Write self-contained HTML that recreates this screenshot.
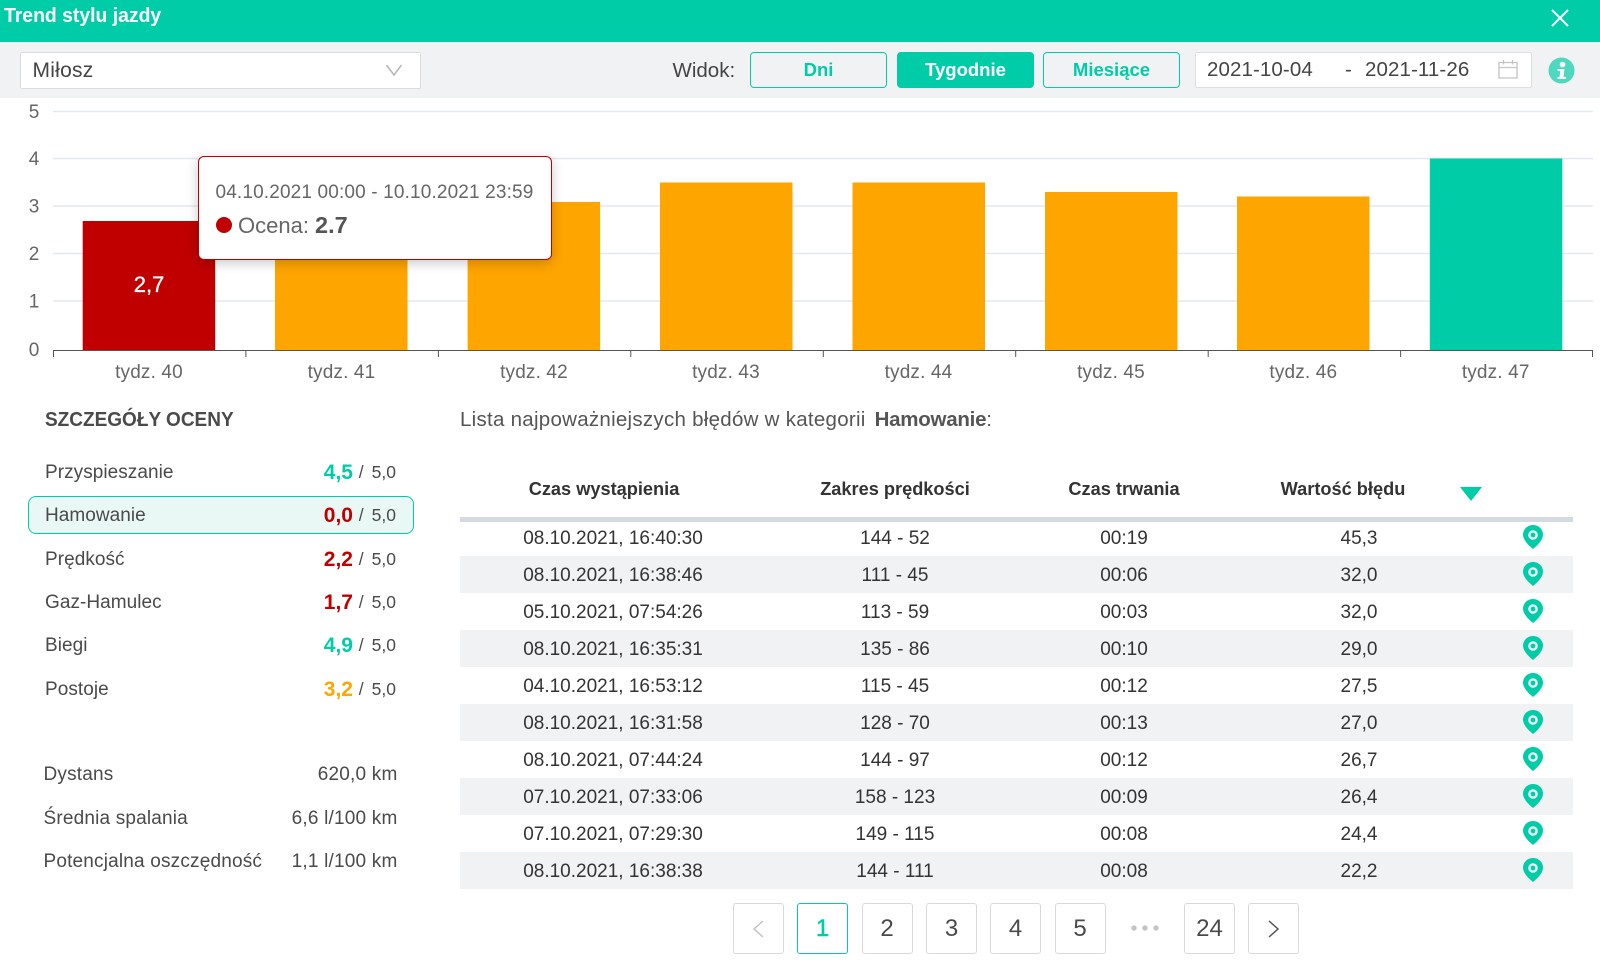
<!DOCTYPE html>
<html lang="pl"><head><meta charset="utf-8"><title>Trend stylu jazdy</title>
<style>
*{box-sizing:border-box}
html,body{margin:0;padding:0;background:#fff}
body{width:1600px;height:964px;position:relative;overflow:hidden;font-family:"Liberation Sans",sans-serif;color:#4a4a4a}
.a{position:absolute;white-space:nowrap}
.c{position:absolute;white-space:nowrap;text-align:center;width:300px;transform:translateX(-150px)}
.btn{position:absolute;top:52px;height:36px;width:137px;border:1px solid #00cda8;border-radius:4px;color:#00cda8;font-weight:bold;font-size:18.500px;line-height:33px;text-align:center}
.r{position:absolute;left:460px;width:1113px;height:37px;font-size:19px;line-height:39px;color:#333}
.r.g{background:#f1f2f4}
.r span{position:absolute;width:300px;text-align:center;transform:translateX(-150px);white-space:nowrap}
.r svg{position:absolute;left:1063px;top:6px}
.h{font-size:18.200px;font-weight:bold;color:#333;top:477px;line-height:24px}
.l{position:absolute;left:45px;width:352px;height:30px;font-size:19px;letter-spacing:.05px;line-height:32px}
.l b{position:absolute;right:44px;font-size:21px;letter-spacing:0}
.l i{position:absolute;right:1px;font-style:normal;font-size:17.500px;letter-spacing:0;line-height:31px}
.l i u{text-decoration:none;margin-left:8px}
.s{position:absolute;left:43.500px;width:354px;font-size:19px;letter-spacing:.18px;line-height:32px;height:30px}
.s em{position:absolute;right:0;font-style:normal;letter-spacing:.2px}
.p{position:absolute;top:903px;width:51px;height:51px;border:1.500px solid #d9d9d9;border-radius:3px;font-size:24px;line-height:50px;text-align:center;color:#4a4a4a}
</style></head><body>
<svg width="0" height="0" style="position:absolute"><defs><symbol id="pin" viewBox="0 0 20 24"><path d="M10 0C4.500 0 0 4.300 0 9.800C0 14.800 5.500 20.500 10 24C14.500 20.500 20 14.800 20 9.800C20 4.300 15.500 0 10 0Z" fill="#00cda8"/><circle cx="10" cy="10" r="3.600" fill="none" stroke="#eef9f7" stroke-width="2.400"/></symbol></defs></svg>

<div class="a" style="left:0;top:0;width:1600px;height:42px;background:#00cda8"></div>
<div class="a" style="left:4px;top:3px;font-size:20.500px;font-weight:bold;color:#fff;line-height:26px;transform:scaleX(.945);transform-origin:0 50%">Trend stylu jazdy</div>
<svg class="a" style="left:1550px;top:8px" width="20" height="20"><path d="M2 2L18 18M18 2L2 18" stroke="#fff" stroke-width="2" fill="none"/></svg>

<div class="a" style="left:0;top:42px;width:1600px;height:56px;background:#f1f2f4"></div>
<div class="a" style="left:20px;top:52px;width:401px;height:37px;background:#fff;border:1.500px solid #dcdcdc;border-radius:2px"></div>
<div class="a" style="left:32.500px;top:57px;font-size:21px;letter-spacing:.25px;line-height:28px;color:#444">Miłosz</div>
<svg class="a" style="left:385px;top:63px" width="18" height="14"><path d="M1.500 2L9 12L16.500 2" stroke="#b5b5b5" stroke-width="1.500" fill="none"/></svg>
<div class="a" style="left:672.500px;top:57px;font-size:20.500px;line-height:28px;color:#444">Widok:</div>
<div class="btn" style="left:750px">Dni</div>
<div class="btn" style="left:897px;background:#00cda8;color:#fff">Tygodnie</div>
<div class="btn" style="left:1043px">Miesiące</div>
<div class="a" style="left:1195px;top:52px;width:337px;height:36px;background:#fff;border:1.500px solid #dfdfdf;border-radius:2px"></div>
<div class="a" style="left:1207px;top:55.500px;font-size:20.500px;letter-spacing:.1px;line-height:28px;color:#444">2021-10-04</div>
<div class="a" style="left:1345px;top:55.500px;font-size:20.500px;line-height:28px;color:#444">-</div>
<div class="a" style="left:1365px;top:55.500px;font-size:20.500px;letter-spacing:.1px;line-height:28px;color:#444">2021-11-26</div>
<svg class="a" style="left:1497px;top:58px" width="22" height="22"><path d="M2 4.500H20V20H2ZM2 9.500H20M6.500 2V6.500M15.500 2V6.500" stroke="#c4c4c4" stroke-width="1.300" fill="none"/></svg>
<svg class="a" style="left:1548px;top:57px" width="27" height="27"><circle cx="13.500" cy="13.500" r="13" fill="#4ed8c0"/><circle cx="14.500" cy="7.500" r="2.800" fill="#fff"/><path d="M9.500 12H16.500L15.500 20H18V22H9.500V20H11.500L12.300 14H9.500Z" fill="#fff"/></svg>

<svg class="a" style="left:0;top:98px" width="1600" height="290">
<g stroke="#e4e8f1" stroke-width="1.500">
<path d="M53 13.500H1593M53 60.500H1593M53 108H1593M53 155.500H1593M53 203H1593"/>
</g>
<g fill="#ffa500">
<rect x="275" y="104" width="132.500" height="148"/>
<rect x="467.600" y="104" width="132.500" height="148"/>
<rect x="660" y="84.500" width="132.500" height="167.500"/>
<rect x="852.500" y="84.500" width="132.500" height="167.500"/>
<rect x="1045" y="94" width="132.500" height="158"/>
<rect x="1237" y="98.500" width="132.500" height="153.500"/>
</g>
<rect x="82.700" y="123" width="132.500" height="129" fill="#c00000"/>
<rect x="1429.800" y="60.500" width="132.500" height="191.500" fill="#00cda8"/>
<path d="M53 252.500H1593M53.500 252V259M245.900 252V259M438.400 252V259M630.800 252V259M823.300 252V259M1015.700 252V259M1208.200 252V259M1400.600 252V259M1592.500 252V259" stroke="#555" stroke-width="1" fill="none"/>
<g font-family="Liberation Sans" font-size="19" fill="#666" text-anchor="middle">
<text x="34" y="20">5</text><text x="34" y="67">4</text><text x="34" y="114.500">3</text><text x="34" y="162">2</text><text x="34" y="209.500">1</text><text x="34" y="258">0</text>
<g letter-spacing=".15">
<text x="149" y="280">tydz. 40</text><text x="341.500" y="280">tydz. 41</text><text x="534" y="280">tydz. 42</text><text x="726" y="280">tydz. 43</text><text x="918.500" y="280">tydz. 44</text><text x="1111" y="280">tydz. 45</text><text x="1303.300" y="280">tydz. 46</text><text x="1495.700" y="280">tydz. 47</text>
</g>
</g>
<text x="149" y="194" font-family="Liberation Sans" font-size="22" fill="#fff" stroke="#fff" stroke-width=".35" text-anchor="middle">2,7</text>
</svg>

<div class="a" style="left:198px;top:156px;width:354px;height:104px;background:#fff;border:1.500px solid #c00000;border-radius:6px;box-shadow:0 3px 12px rgba(0,0,0,.22)"></div>
<div class="a" style="left:215.500px;top:180.500px;font-size:19px;letter-spacing:.15px;line-height:24px;color:#666">04.10.2021 00:00 - 10.10.2021 23:59</div>
<div class="a" style="left:215.500px;top:217px;width:16px;height:16px;border-radius:50%;background:#c00000"></div>
<div class="a" style="left:238px;top:212px;font-size:22px;line-height:27px;color:#666">Ocena: <b style="color:#555;font-size:23.500px">2.7</b></div>

<div class="a" style="left:45px;top:408px;font-size:20px;font-weight:bold;line-height:25px;color:#4a4a4a;transform:scaleX(.95);transform-origin:0 50%">SZCZEGÓŁY OCENY</div>
<div class="a" style="left:460px;top:407px;font-size:20.500px;letter-spacing:.27px;line-height:25px;color:#555">Lista najpoważniejszych błędów w kategorii&nbsp;<span style="margin-left:3px"></span><b style="letter-spacing:-.25px">Hamowanie</b>:</div>

<div class="a" style="left:27.500px;top:496px;width:386px;height:38px;background:#eaf8f5;border:1.500px solid #00cda8;border-radius:8px"></div>
<div class="l" style="top:457px">Przyspieszanie<b style="color:#00cda8">4,5</b><i>/<u>5,0</u></i></div>
<div class="l" style="top:500px">Hamowanie<b style="color:#c00000">0,0</b><i>/<u>5,0</u></i></div>
<div class="l" style="top:544px">Prędkość<b style="color:#c00000">2,2</b><i>/<u>5,0</u></i></div>
<div class="l" style="top:587px">Gaz-Hamulec<b style="color:#c00000">1,7</b><i>/<u>5,0</u></i></div>
<div class="l" style="top:630px">Biegi<b style="color:#00cda8">4,9</b><i>/<u>5,0</u></i></div>
<div class="l" style="top:674px">Postoje<b style="color:#ffa500">3,2</b><i>/<u>5,0</u></i></div>

<div class="s" style="top:759px">Dystans<em>620,0 km</em></div>
<div class="s" style="top:803px">Średnia spalania<em>6,6 l/100 km</em></div>
<div class="s" style="top:846px">Potencjalna oszczędność<em>1,1 l/100 km</em></div>

<div class="c h" style="left:604px">Czas wystąpienia</div>
<div class="c h" style="left:895px">Zakres prędkości</div>
<div class="c h" style="left:1124px">Czas trwania</div>
<div class="c h" style="left:1343px">Wartość błędu</div>
<svg class="a" style="left:1460px;top:487px" width="22" height="14"><path d="M0 0H22L11 14Z" fill="#00cda8"/></svg>
<div class="a" style="left:460px;top:517px;width:1113px;height:4.500px;background:#d5dae0"></div>

<div class="r" style="top:519px"><span style="left:153px">08.10.2021, 16:40:30</span><span style="left:435px">144 - 52</span><span style="left:664px">00:19</span><span style="left:899px">45,3</span><svg width="20" height="24"><use href="#pin"/></svg></div>
<div class="r g" style="top:556px"><span style="left:153px">08.10.2021, 16:38:46</span><span style="left:435px">111 - 45</span><span style="left:664px">00:06</span><span style="left:899px">32,0</span><svg width="20" height="24"><use href="#pin"/></svg></div>
<div class="r" style="top:593px"><span style="left:153px">05.10.2021, 07:54:26</span><span style="left:435px">113 - 59</span><span style="left:664px">00:03</span><span style="left:899px">32,0</span><svg width="20" height="24"><use href="#pin"/></svg></div>
<div class="r g" style="top:630px"><span style="left:153px">08.10.2021, 16:35:31</span><span style="left:435px">135 - 86</span><span style="left:664px">00:10</span><span style="left:899px">29,0</span><svg width="20" height="24"><use href="#pin"/></svg></div>
<div class="r" style="top:667px"><span style="left:153px">04.10.2021, 16:53:12</span><span style="left:435px">115 - 45</span><span style="left:664px">00:12</span><span style="left:899px">27,5</span><svg width="20" height="24"><use href="#pin"/></svg></div>
<div class="r g" style="top:704px"><span style="left:153px">08.10.2021, 16:31:58</span><span style="left:435px">128 - 70</span><span style="left:664px">00:13</span><span style="left:899px">27,0</span><svg width="20" height="24"><use href="#pin"/></svg></div>
<div class="r" style="top:741px"><span style="left:153px">08.10.2021, 07:44:24</span><span style="left:435px">144 - 97</span><span style="left:664px">00:12</span><span style="left:899px">26,7</span><svg width="20" height="24"><use href="#pin"/></svg></div>
<div class="r g" style="top:778px"><span style="left:153px">07.10.2021, 07:33:06</span><span style="left:435px">158 - 123</span><span style="left:664px">00:09</span><span style="left:899px">26,4</span><svg width="20" height="24"><use href="#pin"/></svg></div>
<div class="r" style="top:815px"><span style="left:153px">07.10.2021, 07:29:30</span><span style="left:435px">149 - 115</span><span style="left:664px">00:08</span><span style="left:899px">24,4</span><svg width="20" height="24"><use href="#pin"/></svg></div>
<div class="r g" style="top:852px"><span style="left:153px">08.10.2021, 16:38:38</span><span style="left:435px">144 - 111</span><span style="left:664px">00:08</span><span style="left:899px">22,2</span><svg width="20" height="24"><use href="#pin"/></svg></div>

<div class="p" style="left:733px"><svg width="14" height="20" style="position:absolute;left:17px;top:15px"><path d="M12 2L3 10L12 18" stroke="#c4c4c4" stroke-width="1.500" fill="none"/></svg></div>
<div class="p" style="left:797px;border-color:#00cda8;color:#00cda8;-webkit-text-stroke:.5px #00cda8">1</div>
<div class="p" style="left:861.500px">2</div>
<div class="p" style="left:926px">3</div>
<div class="p" style="left:990px">4</div>
<div class="p" style="left:1054.500px">5</div>
<svg class="a" style="left:1130px;top:923px" width="30" height="10"><g fill="#c4c4c4"><circle cx="4" cy="5" r="2.700"/><circle cx="15" cy="5" r="2.700"/><circle cx="26" cy="5" r="2.700"/></g></svg>
<div class="p" style="left:1184px">24</div>
<div class="p" style="left:1248px"><svg width="14" height="20" style="position:absolute;left:18px;top:15px"><path d="M2 2L11 10L2 18" stroke="#555" stroke-width="1.500" fill="none"/></svg></div>
</body></html>
